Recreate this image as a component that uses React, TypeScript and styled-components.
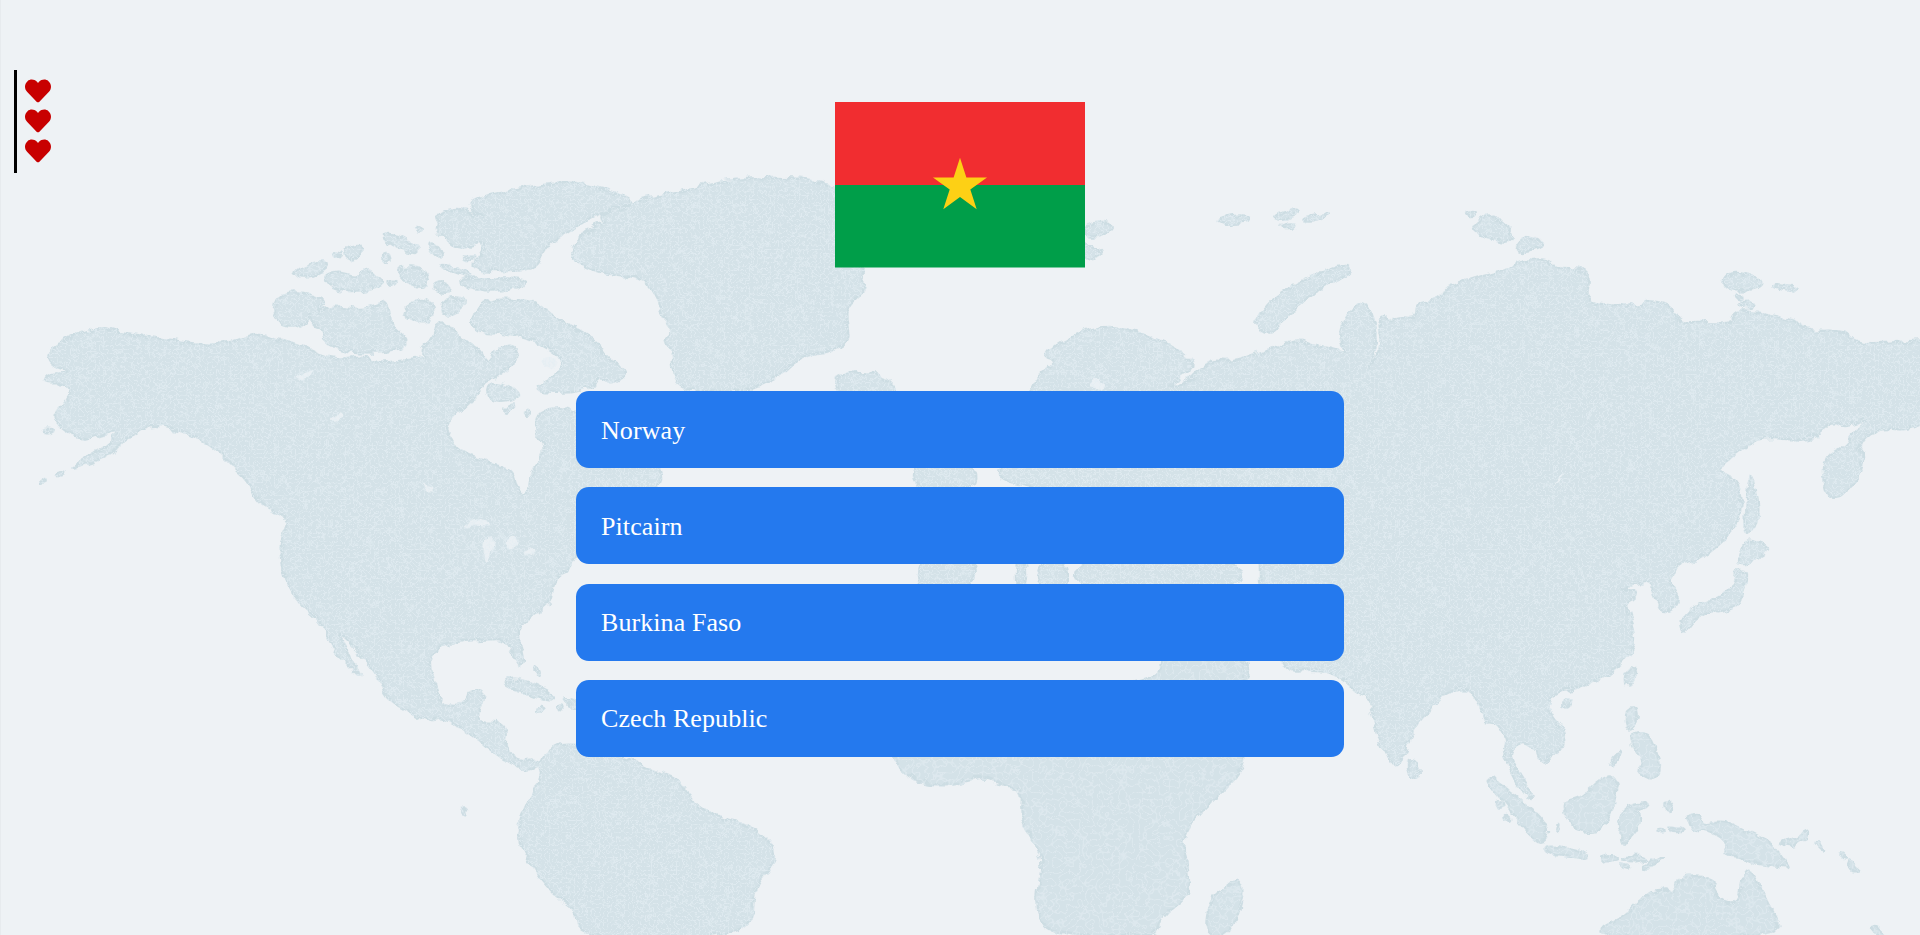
import React from "react";
import styled, { createGlobalStyle } from "styled-components";
import { FaHeart } from "react-icons/fa";

const GlobalStyle = createGlobalStyle`
  html, body { margin: 0; padding: 0; height: 100%; overflow: hidden; background: #eef2f5; }
  * { box-sizing: border-box; }
`;

const Stage = styled.div`
  display: grid;
  width: 100%;
  height: 100vh;
  overflow: hidden;
  background: #eef2f5;
  border-left: 1px solid #e7ebee;
  font-family: "Liberation Serif", "Times New Roman", serif;
`;

const WorldMap = styled.svg`
  grid-area: 1 / 1;
  display: block;
  width: 1920px;
  height: 935px;
  margin-left: -1px;
`;

const Content = styled.div`
  grid-area: 1 / 1;
  display: grid;
  grid-template-columns: 1fr 768px 1fr;
  margin-left: -1px;
`;

const Lives = styled.ul`
  justify-self: start;
  align-self: start;
  display: flex;
  flex-direction: column;
  gap: 4px;
  list-style: none;
  margin: 70px 0 0 14px;
  padding: 8.4px 0 8.3px 8px;
  border-left: 3px solid #000;
  color: #c80000;
`;

const Life = styled.li`
  display: block;
  width: 26px;
  height: 26px;
  svg { display: block; }
`;

const Quiz = styled.main`
  display: flex;
  flex-direction: column;
  align-items: center;
  padding-top: 102px;
`;

const Flag = styled.svg`
  display: block;
  width: 250px;
  height: 165.5px;
`;

const Options = styled.div`
  display: flex;
  flex-direction: column;
  gap: 19.33px;
  width: 100%;
  margin-top: 123.5px;
`;

const Option = styled.button`
  display: block;
  width: 100%;
  height: 77px;
  padding: 2px 25px 0;
  border: 0;
  border-radius: 12.8px;
  background: #2479ee;
  color: #fff;
  font-family: inherit;
  font-size: 26px;
  letter-spacing: 0.08px;
  text-align: left;
  cursor: pointer;
`;

type Frame = [number, number, number, number];
const frames: Record<string, Frame> = {
  r: [0, 0, 1, 1],
  z5: [960, 170, 1.633, 2.05],
  z7: [30, 170, 2.613, 3],
  z8: [240, 535, 2.613, 3],
  z9: [540, 170, 2.613, 3],
  z10: [1320, 190, 2.613, 3],
  z11: [1320, 535, 2.613, 3],
  z12: [860, 660, 3, 3],
};

function toPath(shape: string): string {
  const pts: [number, number][] = [];
  shape.split("|").forEach((seg) => {
    const [key, body] = seg.split(":");
    const [x0, y0, sx, sy] = frames[key.trim()];
    body.trim().split(/\s+/).forEach((p) => {
      const [x, y] = p.split(",").map(Number);
      pts.push([x0 + x / sx, y0 + y / sy]);
    });
  });
  const mid = (a: [number, number], b: [number, number]) => `${((a[0] + b[0]) / 2).toFixed(1)} ${((a[1] + b[1]) / 2).toFixed(1)}`;
  let d = `M${mid(pts[pts.length - 1], pts[0])}`;
  pts.forEach((p, i) => {
    d += `Q${p[0].toFixed(1)} ${p[1].toFixed(1)} ${mid(p, pts[(i + 1) % pts.length])}`;
  });
  return d + "Z";
}

const fineLand: string[] = [
  // North and Central America
  "z7: 45,545 100,505 185,468 240,490 370,510 480,530 570,500 600,492 650,510 700,520 790,572 880,555 900,582 975,572 1030,565 1020,535 1050,510 1060,460 1095,455 1120,510 1180,540 1195,590 1225,530 1270,525 1272,570 1225,620 1190,630 1170,670 1120,720 1085,770 1100,810 1120,845 1200,880 1260,900 1270,950 1295,982 1310,900 1340,860 1340,820 1320,800 1320,730 1370,712 1430,720 | r: 640,430 662,470 660,490 620,500 590,540 577,555 | z8: 860,105 830,115 815,170 810,200 770,240 735,270 725,300 745,380 735,400 710,350 700,310 610,315 560,320 510,340 495,380 510,460 530,510 590,510 600,465 645,465 625,520 620,560 680,560 700,585 690,640 730,680 770,670 790,690 770,700 740,705 700,680 660,650 610,600 570,570 530,545 490,560 440,530 380,490 375,450 325,370 255,285 270,330 322,435 300,410 245,350 225,290 200,245 150,200 115,120 105,60 110,0 | z7: 660,1200 655,1100 680,1050 620,1010 595,990 570,930 530,890 490,840 420,790 320,760 280,790 240,810 215,855 100,900 125,880 200,830 240,780 180,800 120,810 50,740 100,690 110,640 30,640 50,610 110,610 50,580",
  // Arctic Canada
  "z7: 1130,100 1220,70 1330,45 1420,38 1510,60 1568,85 1568,105 1480,130 1400,190 1360,220 1340,250 1320,300 1200,305 1150,290 1180,250 1190,215 1120,240 1075,200 1055,170 1080,120 1130,115 1200,150",
  "z7: 1148,445 1190,392 1250,388 1320,395 1370,445 1470,500 1510,570 1566,605 1525,645 1480,615 1470,655 1400,670 1320,665 1330,640 1385,610 1395,560 1320,510 1240,490 1170,490",
  "z7: 1195,640 1240,640 1285,680 1230,700 1195,680",
  "z7: 650,370 720,365 780,395 740,430 710,470 660,470 635,435",
  "z7: 735,435 790,405 860,420 900,410 935,395 945,470 990,510 970,545 830,550 760,510 770,480 735,460",
  "z7: 970,420 1030,380 1065,420 1030,465 985,440",
  "z7: 1070,385 1140,385 1130,420 1085,445",
  "z7: 680,305 770,265 780,295 720,330",
  "z7: 815,235 870,220 870,250 830,275",
  "z7: 760,325 800,300 860,320 880,295 925,325 920,350 810,370",
  "z7: 925,195 960,195 1020,240 1000,250 930,215",
  "z7: 945,295 1030,290 1045,350 1000,350",
  "z7: 1035,220 1060,220 1085,260 1060,265",
  "z7: 1055,285 1100,285 1160,320 1130,320",
  "z7: 1120,325 1290,325 1300,350 1210,365 1125,350",
  "z7: 1055,340 1085,330 1105,365 1060,365",
  "z7: 1005,165 1028,178 1025,187 1008,178",
  "z7: 920,255 935,250 942,275 928,280",
  "z7: 936,335 955,335 955,350 938,350",
  "z7: 1135,262 1158,258 1158,272 1138,274",
  "z7: 790,245 812,245 812,260 795,262",
  "z7: 32,778 58,775 58,790 35,790",
  "z7: 30,930 42,925 40,940 30,942",
  "z7: 68,910 90,905 90,915 70,916",
  "z7: 1240,712 1265,700 1265,718 1245,728",
  "z7: 1290,722 1305,718 1305,736 1292,738",
  // Greenland
  "z9: 75,235 150,160 180,170 150,130 230,110 240,95 380,65 440,38 580,22 720,28 800,60 850,180 840,310 850,360 800,410 800,460 810,510 770,540 680,560 630,620 540,665 370,665 345,600 350,540 325,510 350,480 320,440 310,390 270,320 150,310 90,270",
  // Iceland and the North Atlantic
  "z9: 775,620 800,610 880,610 925,640 930,680 780,680",
  "z9: 1420,170 1460,150 1510,170 1470,200 1420,205",
  "z9: 1420,220 1480,250 1440,270 1420,265",
  // Eurasia
  "z9: 1280,670 1300,620 1350,570 1315,560 1340,530 1420,480 1510,465 | z5: 340,355 385,395 370,420 340,440 350,447 375,432 410,385 440,395 500,370 550,345 575,360 | z10: 30,475 70,490 50,440 60,395 95,345 125,345 140,400 148,450 140,500 125,545 155,490 160,440 150,400 170,365 178,400 205,375 250,385 250,340 320,330 330,290 420,255 490,240 520,215 590,205 620,235 690,235 705,270 695,320 720,340 840,350 850,330 920,345 940,400 975,395 1075,400 1080,375 1100,360 1230,385 1280,425 1370,420 1400,460 1480,460 1568,450 1600,455 1600,690 1530,720 1500,715 1440,720 1400,770 1425,800 1400,880 1335,935 1315,870 1320,800 1370,770 1430,680 1420,690 1370,710 1340,690 1300,740 1240,750 1150,740 1100,780 1030,840 1090,870 1100,930 1095,1000 | z11: 1040,30 990,72 940,85 905,130 935,185 935,215 900,232 885,220 870,160 860,135 810,155 780,160 830,170 825,190 795,205 825,290 820,340 770,410 700,445 660,465 610,470 590,520 640,590 635,640 590,680 575,680 560,630 510,620 490,660 520,720 565,800 535,780 500,710 480,650 490,620 465,570 450,560 430,565 420,510 385,455 330,475 290,520 240,590 225,660 195,695 165,650 130,510 125,480 100,475 60,430 0,400 | r: 1281,672 1281,640 1260,640 1260,500 1000,490 1000,462",
  // Hidden Mediterranean rims seen in the gaps between the answers
  "r: 912,460 972,458 978,490 914,492",
  "r: 918,556 974,556 974,592 918,592",
  "r: 1016,560 1026,560 1026,590 1016,590",
  "r: 1038,560 1068,560 1068,590 1038,590",
  "r: 1076,555 1242,555 1242,595 1076,595",
  // Arabia
  "r: 1168,640 1248,640 1248,700 1168,700",
  // South America
  "z8: 780,690 800,650 860,620 1020,670 1060,700 1140,730 1170,770 1190,815 1260,850 1330,870 1400,930 1395,990 1340,1060 1340,1210 885,1210 880,1120 820,1080 760,990 725,920 735,830 770,770 790,720",
  // Caribbean
  "z8: 680,445 720,430 770,450 830,490 800,495 740,470",
  "z8: 845,490 885,500 885,530 855,505",
  "z8: 770,516 798,516 798,530 772,530",
  "z8: 826,514 848,510 848,526 828,526",
  "z8: 768,395 778,400 782,420 770,415",
  "z8: 580,820 592,820 596,842 584,845",
  // Arctic Russia
  "z5: 480,310 520,250 610,200 640,195 630,220 560,260 520,320 510,335 490,330",
  "z5: 420,100 470,90 475,105 430,110",
  "z5: 505,95 550,80 555,90 530,105",
  "z5: 555,100 605,88 600,98 570,108",
  "z5: 525,112 550,108 548,118 525,120",
  "z10: 400,105 450,65 475,100 505,125 495,160 445,145 400,125",
  "z10: 500,185 540,135 590,160 560,180",
  "z10: 380,68 402,65 402,78 384,78",
  "z10: 1045,275 1075,245 1160,270 1150,295 1080,305",
  "z10: 1180,280 1250,290 1240,305 1190,295",
  "z10: 1086,315 1104,315 1104,330 1088,330",
  "z10: 1098,335 1140,335 1140,355 1100,355",
  "z10: 1120,860 1135,870 1150,980 1125,1035 1110,1020 1115,950",
  "z10: 1245,745 1305,735 1305,745 1250,755",
  // Japan and East Asia
  "z11: 1110,20 1130,15 1180,38 1150,70 1095,90 1095,60",
  "z11: 1090,100 1115,110 1110,160 1095,215 1040,235 1020,225 975,255 950,295 940,255 980,215 1030,195 1075,165",
  "z11: 805,405 825,400 820,430 803,455 797,430",
  "z11: 635,490 660,490 650,520 632,515",
  "z11: 232,670 255,690 260,720 240,732 228,700",
];

const coarseLand: string[] = [
  // Africa
  "z12: 100,290 130,340 200,375 300,370 380,345 430,380 490,385 480,470 530,560 550,610 525,730 560,830 890,830 900,770 970,720 990,680 980,600 965,560 990,490 1050,430 1130,350 1160,290 | r: 1240,730 1248,640 1162,640 1162,690 882,690 875,700",
  // Madagascar
  "z12: 1130,650 1155,700 1110,830 1035,830 1045,720 1110,680",
  // South-East Asia
  "z11: 800,520 830,520 830,560 810,590 795,565",
  "z11: 810,595 860,595 880,660 892,700 870,738 825,710 850,680 820,640",
  "z11: 785,645 790,650 765,695 755,685",
  "z11: 435,735 450,730 520,790 600,870 590,920 565,920 500,830",
  "z11: 630,800 680,790 745,715 780,740 770,810 740,890 680,890 650,860",
  "z11: 790,815 865,800 840,825 810,830 845,840 825,890 800,925 785,920 790,890 775,880",
  "z11: 585,930 640,935 700,955 700,970 650,965 590,955",
  "z11: 735,965 780,962 775,982 740,982",
  "z11: 790,965 850,965 850,977 795,980",
  "z11: 840,990 905,960 880,985 850,1003",
  "z11: 780,985 805,995 805,1003 785,995",
  "z11: 900,795 920,800 925,825 905,835",
  "z11: 880,878 900,880 900,892 885,892",
  "z11: 910,876 950,882 950,892 915,890",
  "z11: 464,800 476,805 476,822 466,820",
  "z11: 484,842 494,845 494,858 486,856",
  "z11: 615,870 625,870 625,885 615,885",
  // New Guinea and the Pacific
  "z11: 955,840 990,835 1005,870 1050,855 1110,885 1190,930 1200,965 1235,1005 1180,990 1130,985 1095,965 1050,965 1070,920 1010,885 975,890 965,860",
  "z11: 1205,920 1250,905 1275,885 1275,905 1235,935 1210,930",
  "z11: 1298,920 1308,922 1320,945 1308,942",
  "z11: 1355,955 1365,955 1378,972 1365,970",
  "z11: 1385,970 1395,975 1412,1012 1370,995",
  // Australia
  "z11: 690,1210 800,1140 830,1100 880,1060 930,1075 940,1020 1035,1030 1020,1070 1090,1120 1105,1010 1130,1005 1170,1110 1225,1210",
  "z11: 1435,1172 1448,1172 1482,1205 1460,1205",
];

const water: string[] = [
  "z7: 1125,1075 1170,1040 1220,1075 1150,1068",
  "z7: 1192,1100 1215,1110 1192,1185 1186,1140",
  "z7: 1240,1100 1285,1100 1255,1150",
  "z7: 1290,1140 1335,1130 1290,1165",
  "z7: 690,622 750,595 730,625 705,632",
  "z7: 780,745 810,725 820,745 790,755",
  "z7: 1030,930 1040,935 1050,972 1040,965",
  "z9: 1430,640 1460,625 1480,650 1450,665",
  "z9: 0,570 40,555 40,590 10,600",
  "z10: 640,835 632,870 585,905 620,875",
];

const Land = styled.path`
  fill: #d4e2e8;
  stroke: #cddde3;
  stroke-width: 2.5;
  stroke-linejoin: round;
`;

const Water = styled.path`
  fill: #eaf0f4;
`;

const answers = ["Norway", "Pitcairn", "Burkina Faso", "Czech Republic"];

function star(cx: number, cy: number, R: number): string {
  const r = R * 0.382;
  const pts: string[] = [];
  for (let i = 0; i < 10; i++) {
    const rad = i % 2 === 0 ? R : r;
    const a = -Math.PI / 2 + (i * Math.PI) / 5;
    pts.push(`${(cx + rad * Math.cos(a)).toFixed(2)},${(cy + rad * Math.sin(a)).toFixed(2)}`);
  }
  return pts.join(" ");
}

function Terrain({ id, frequency, seed, strength }: { id: string; frequency: number; seed: number; strength: number }) {
  return (
    <filter id={id} filterUnits="userSpaceOnUse" x="0" y="0" width="1920" height="935" colorInterpolationFilters="sRGB">
      <feTurbulence type="fractalNoise" baseFrequency="0.1" numOctaves="2" seed={seed + 2} result="wobble" />
      <feDisplacementMap in="SourceGraphic" in2="wobble" scale="9" xChannelSelector="R" yChannelSelector="G" result="ground" />
      <feTurbulence type="turbulence" baseFrequency={frequency} numOctaves="1" seed={seed} result="noise" />
      <feColorMatrix
        in="noise"
        type="matrix"
        values={`0 0 0 0 0.89  0 0 0 0 0.93  0 0 0 0 0.95  -5 0 0 0 ${strength}`}
        result="veins"
      />
      <feGaussianBlur in="veins" stdDeviation="0.6" result="soft" />
      <feComposite in="soft" in2="ground" operator="in" result="clipped" />
      <feMerge>
        <feMergeNode in="ground" />
        <feMergeNode in="clipped" />
      </feMerge>
    </filter>
  );
}

export default function App() {
  return (
    <Stage>
      <GlobalStyle />
      <WorldMap viewBox="0 0 1920 935" aria-hidden="true">
        <defs>
          <Terrain id="terrain-fine" frequency={0.24} seed={7} strength={0.7} />
          <Terrain id="terrain-coarse" frequency={0.15} seed={11} strength={0.6} />
        </defs>
        <g filter="url(#terrain-fine)">
          {fineLand.map((s, i) => (
            <Land key={i} d={toPath(s)} />
          ))}
          {water.map((s, i) => (
            <Water key={i} d={toPath(s)} />
          ))}
        </g>
        <g filter="url(#terrain-coarse)">
          {coarseLand.map((s, i) => (
            <Land key={i} d={toPath(s)} />
          ))}
        </g>
      </WorldMap>
      <Content>
        <Lives>
          {[0, 1, 2].map((i) => (
            <Life key={i}>
              <FaHeart size={26} />
            </Life>
          ))}
        </Lives>
        <Quiz>
          <Flag viewBox="0 0 250 165.5" aria-label="Flag">
            <rect width="250" height="83" fill="#f12d30" />
            <rect y="83" width="250" height="82.5" fill="#009e49" />
            <polygon points={star(125, 84.2, 28.4)} fill="#fdd015" />
          </Flag>
          <Options>
            {answers.map((a) => (
              <Option key={a}>{a}</Option>
            ))}
          </Options>
        </Quiz>
        <div />
      </Content>
    </Stage>
  );
}
